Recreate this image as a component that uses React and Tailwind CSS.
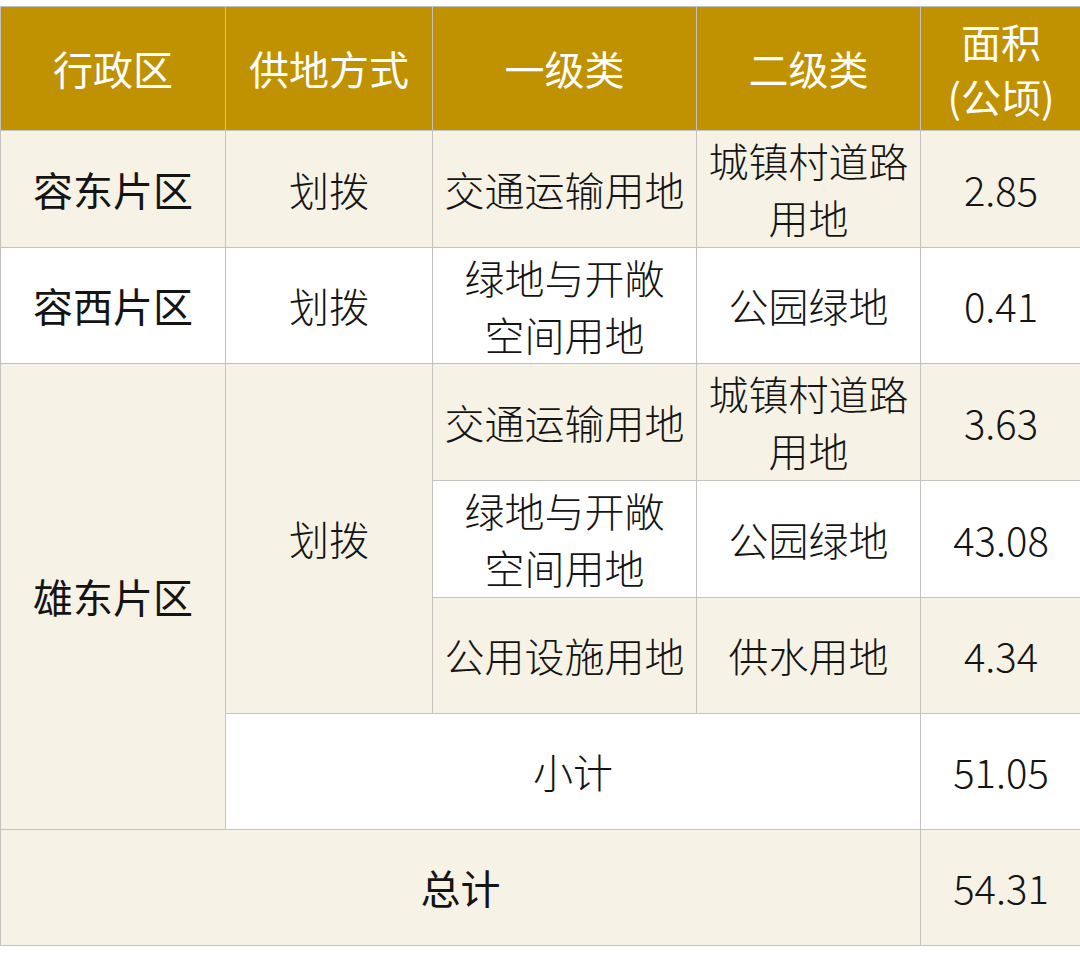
import React from 'react';

const font = { fontFamily: '"Noto Sans CJK SC", "Noto Sans", sans-serif' };

const cream = 'bg-[#f7f2e6]';
const cell = 'border border-[#c4c2bd] text-center align-middle p-0 text-[40px] leading-[57px] font-light text-[#141414]';
const strong = 'border border-[#c4c2bd] text-center align-middle p-0 text-[40px] leading-[57px] font-normal text-[#141414]';
const head = 'border border-[#c4c2bd] text-center align-middle p-0 text-[40px] leading-[55px] font-normal text-white';

export default function App() {
    return (
        <div className="w-[1080px] h-[954px] bg-white pt-[6px] overflow-hidden" style={font}>
            <table className="table-fixed border-collapse w-[1081px]">
                <colgroup>
                    <col className="w-[225px]" />
                    <col className="w-[207px]" />
                    <col className="w-[264px]" />
                    <col className="w-[224px]" />
                    <col className="w-[161px]" />
                </colgroup>
                <thead>
                    <tr className="h-[124px] bg-[#c09100]">
                        <th className={head}>行政区</th>
                        <th className={head}>供地方式</th>
                        <th className={head}>一级类</th>
                        <th className={head}>二级类</th>
                        <th className={head}>
                            面积<br />(公顷)
                        </th>
                    </tr>
                </thead>
                <tbody>
                    <tr className={`h-[117px] ${cream}`}>
                        <td className={strong}>容东片区</td>
                        <td className={cell}>划拨</td>
                        <td className={cell}>交通运输用地</td>
                        <td className={cell}>城镇村道路<br />用地</td>
                        <td className={cell}>2.85</td>
                    </tr>
                    <tr className="h-[116px] bg-white">
                        <td className={strong}>容西片区</td>
                        <td className={cell}>划拨</td>
                        <td className={cell}>绿地与开敞<br />空间用地</td>
                        <td className={cell}>公园绿地</td>
                        <td className={cell}>0.41</td>
                    </tr>
                    <tr className={`h-[117px] ${cream}`}>
                        <td rowSpan={4} className={`${strong} ${cream}`}>雄东片区</td>
                        <td rowSpan={3} className={`${cell} ${cream}`}>划拨</td>
                        <td className={cell}>交通运输用地</td>
                        <td className={cell}>城镇村道路<br />用地</td>
                        <td className={cell}>3.63</td>
                    </tr>
                    <tr className="h-[117px] bg-white">
                        <td className={cell}>绿地与开敞<br />空间用地</td>
                        <td className={cell}>公园绿地</td>
                        <td className={cell}>43.08</td>
                    </tr>
                    <tr className={`h-[116px] ${cream}`}>
                        <td className={cell}>公用设施用地</td>
                        <td className={cell}>供水用地</td>
                        <td className={cell}>4.34</td>
                    </tr>
                    <tr className="h-[116px] bg-white">
                        <td colSpan={3} className={cell}>小计</td>
                        <td className={cell}>51.05</td>
                    </tr>
                    <tr className={`h-[116px] ${cream}`}>
                        <td colSpan={4} className={strong}>总计</td>
                        <td className={cell}>54.31</td>
                    </tr>
                </tbody>
            </table>
        </div>
    );
}
